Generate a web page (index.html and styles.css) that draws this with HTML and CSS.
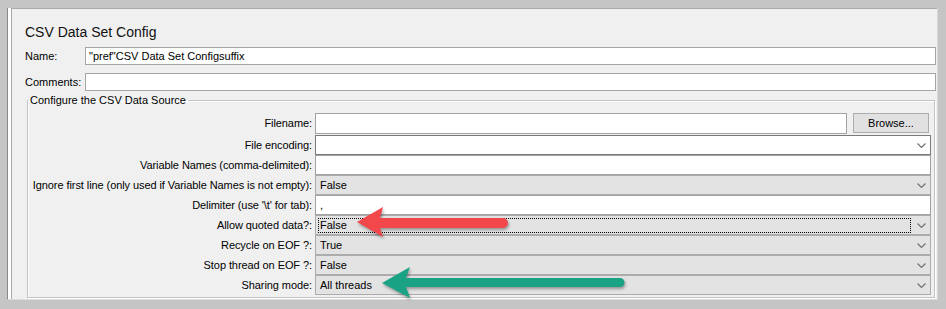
FILE: index.html
```html
<!DOCTYPE html>
<html>
<head>
<meta charset="utf-8">
<link rel="stylesheet" href="styles.css">
</head>
<body>
<div class="window">
  <div class="panel">
    <div class="title">CSV Data Set Config</div>
    <div class="line">
      <span class="lbl">Name:</span>
      <div class="input">"pref"CSV Data Set Configsuffix</div>
    </div>
    <div class="line comments">
      <span class="lbl">Comments:</span>
      <div class="input"></div>
    </div>
    <fieldset class="group">
      <legend>Configure the CSV Data Source</legend>
      <div class="grid">
        <span class="lab first">Filename:</span>
        <div class="filerow">
          <div class="tf"></div>
          <div class="browse">Browse...</div>
        </div>

        <span class="lab">File encoding:</span>
        <div class="combo white"><span class="val"></span><span class="btn"><svg width="9" height="5" viewBox="0 0 9 5"><polyline points="0.5,0.5 4.5,4.5 8.5,0.5" fill="none" stroke="#6e6e6e" stroke-width="1.1"/></svg></span></div>

        <span class="lab">Variable Names (comma-delimited):</span>
        <div class="tf"></div>

        <span class="lab">Ignore first line (only used if Variable Names is not empty):</span>
        <div class="combo"><span class="val">False</span><span class="btn"><svg width="9" height="5" viewBox="0 0 9 5"><polyline points="0.5,0.5 4.5,4.5 8.5,0.5" fill="none" stroke="#6e6e6e" stroke-width="1.1"/></svg></span></div>

        <span class="lab">Delimiter (use '\t' for tab):</span>
        <div class="tf">,</div>

        <span class="lab">Allow quoted data?:</span>
        <div class="combo"><span class="val focus">False</span><span class="btn"><svg width="9" height="5" viewBox="0 0 9 5"><polyline points="0.5,0.5 4.5,4.5 8.5,0.5" fill="none" stroke="#6e6e6e" stroke-width="1.1"/></svg></span></div>

        <span class="lab">Recycle on EOF ?:</span>
        <div class="combo"><span class="val">True</span><span class="btn"><svg width="9" height="5" viewBox="0 0 9 5"><polyline points="0.5,0.5 4.5,4.5 8.5,0.5" fill="none" stroke="#6e6e6e" stroke-width="1.1"/></svg></span></div>

        <span class="lab">Stop thread on EOF ?:</span>
        <div class="combo"><span class="val">False</span><span class="btn"><svg width="9" height="5" viewBox="0 0 9 5"><polyline points="0.5,0.5 4.5,4.5 8.5,0.5" fill="none" stroke="#6e6e6e" stroke-width="1.1"/></svg></span></div>

        <span class="lab">Sharing mode:</span>
        <div class="combo"><span class="val">All threads</span><span class="btn"><svg width="9" height="5" viewBox="0 0 9 5"><polyline points="0.5,0.5 4.5,4.5 8.5,0.5" fill="none" stroke="#6e6e6e" stroke-width="1.1"/></svg></span></div>
      </div>
    </fieldset>
  </div>
</div>

<svg class="arrow red" width="170" height="46" viewBox="0 0 170 46">
  <path d="M7 22 L33 7 L30 18 L153 18 A5 5 0 0 1 153 28 L30 28 L33 37 Z" fill="#f2474b"/>
</svg>
<svg class="arrow green" width="262" height="46" viewBox="0 0 262 46">
  <path d="M7 23 L35 7 L31 18 L245 18 A4.5 4.5 0 0 1 245 27 L31 27 L35 38 Z" fill="#1aa284"/>
</svg>
</body>
</html>
```

FILE: styles.css
```css
html, body {
  margin: 0;
}
body {
  position: relative;
  width: 946px;
  height: 309px;
  box-sizing: border-box;
  padding: 8px 0 0 7px;
  overflow: hidden;
  background: #c5c5c5;
  font-family: "Liberation Sans", Arial, sans-serif;
  font-size: 11px;
  color: #000;
}
.window {
  width: 931px;
  height: 292px;
  box-sizing: border-box;
  border-left: 1px solid #8a8a8a;
  border-right: 1px solid #dadada;
  border-bottom: 1px solid #dcdcdc;
  background: #ffffff;
  padding-left: 3px;
}
.panel {
  height: 100%;
  box-sizing: border-box;
  background: #f0f0f0;
  border-left: 1px solid #a9a9a9;
  border-top: 1px solid #a9a9a9;
  padding: 0 1px 0 13px;
  display: flex;
  flex-direction: column;
}
.title {
  font-size: 14px;
  line-height: 18px;
  margin-top: 14px;
  color: #111;
}
.line {
  display: flex;
  align-items: center;
  height: 18px;
  margin-top: 6px;
}
.line.comments {
  margin-top: 8px;
}
.lbl {
  width: 60px;
  flex: none;
}
.input {
  flex: 1;
  height: 18px;
  box-sizing: border-box;
  background: #fff;
  border: 1px solid #a5a5a5;
  padding-left: 3px;
  line-height: 16px;
  white-space: nowrap;
}
.group {
  margin: 3px 1px 0 2px;
  padding: 6px 3px 2px 0;
  border: 1px solid #c3c3c3;
  box-shadow: inset 1px 1px 0 #fff, 1px 1px 0 #fff;
  min-width: 0;
}
.group legend {
  padding: 0 2px;
  line-height: 13px;
  font-size: 11px;
}
.grid {
  display: grid;
  grid-template-columns: 284px 1fr;
  grid-template-rows: 22px repeat(8, 20px);
  column-gap: 3px;
}
.lab {
  text-align: right;
  line-height: 20px;
  white-space: nowrap;
  letter-spacing: -0.08px;
}
.lab.first {
  line-height: 21px;
}
.filerow {
  display: flex;
  gap: 6px;
  align-items: flex-start;
}
.tf {
  flex: 1;
  height: 20px;
  box-sizing: border-box;
  background: #fff;
  border: 1px solid #a3a3a3;
  padding-left: 4px;
  line-height: 18px;
}
.filerow .tf {
  height: 21px;
}
.browse {
  width: 76px;
  height: 20px;
  margin-right: 2px;
  box-sizing: border-box;
  background: #e1e1e1;
  border: 1px solid #adadad;
  text-align: center;
  line-height: 18px;
}
.combo {
  display: flex;
  height: 20px;
  box-sizing: border-box;
  background: #e3e3e3;
  border: 1px solid #acacac;
}
.combo.white {
  background: #fff;
  border-color: #7a7a7a;
}
.combo .val {
  flex: 1;
  padding-left: 4px;
  line-height: 18px;
}
.combo .val.focus {
  margin: 2px 2px 1px 2px;
  padding-left: 1px;
  border: 1px dotted #000;
  line-height: 13px;
}
.combo .btn {
  width: 17px;
  display: flex;
  align-items: center;
  justify-content: center;
}
.arrow {
  position: absolute;
  filter: drop-shadow(1px 2px 1.5px rgba(0, 0, 0, 0.35));
}
.arrow.red {
  left: 350px;
  top: 200px;
}
.arrow.green {
  left: 375px;
  top: 260px;
}
```
